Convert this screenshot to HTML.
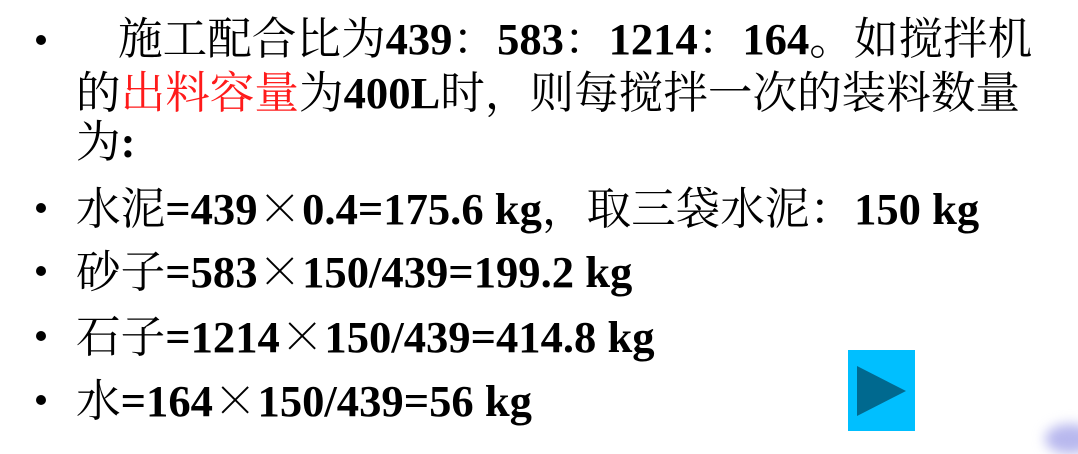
<!DOCTYPE html>
<html><head><meta charset="utf-8"><style>
html,body{margin:0;padding:0;width:1078px;height:443px;overflow:hidden;background:#fff}
.l{position:absolute;left:76px;white-space:nowrap;font-family:"Liberation Serif","Noto Serif CJK SC",serif;font-size:44.6px;line-height:50px;color:#000}
.d{position:absolute;left:36px;width:10px;height:10px;border-radius:50%;background:#000}
b{font-weight:bold}
.c{font-family:"Noto Serif CJK SC",serif;font-weight:normal}
.r{color:#ff1a1a}
</style></head><body>
<div class="d" style="top:35px"></div>
<div class="l" style="top:10px"><span style="display:inline-block;width:42px"></span>施工配合比为<b>439<span class="c">：</span>583<span class="c">：</span>1214<span class="c">：</span>164</b>。如搅拌机</div>
<div class="l" style="top:64px">的<span class="r">出料容量</span>为<b>400L</b>时<span class="c">，</span>则每搅拌一次的装料数量</div>
<div class="l" style="top:117px">为<b>:</b></div>
<div class="d" style="top:203px"></div>
<div class="l" style="top:180px">水泥<b>=439</b><span class="c">×</span><b>0.4=175.6 kg</b><span class="c">，</span>取三袋水泥<span class="c">：</span><b>150 kg</b></div>
<div class="d" style="top:266px"></div>
<div class="l" style="top:243px">砂子<b>=583</b><span class="c">×</span><b>150/439=199.2 kg</b></div>
<div class="d" style="top:331px"></div>
<div class="l" style="top:308px">石子<b>=1214</b><span class="c">×</span><b>150/439=414.8 kg</b></div>
<div class="d" style="top:395px"></div>
<div class="l" style="top:372px">水<b>=164</b><span class="c">×</span><b>150/439=56 kg</b></div>
<div style="position:absolute;left:848px;top:350px;width:67px;height:81px;background:#00bfff"></div>
<svg style="position:absolute;left:848px;top:350px" width="67" height="81"><polygon points="9,16 58,41 9,66" fill="#00698f"/></svg>
<div style="position:absolute;left:1045px;top:424px;width:50px;height:30px;background:#b8b8ee;border-radius:50%;filter:blur(6px)"></div>
</body></html>
